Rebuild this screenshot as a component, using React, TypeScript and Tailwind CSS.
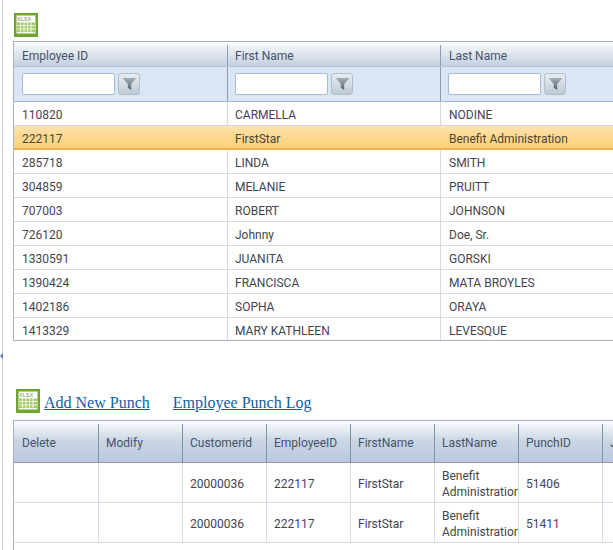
const employees = [
  ['110820', 'CARMELLA', 'NODINE'],
  ['222117', 'FirstStar', 'Benefit Administration'],
  ['285718', 'LINDA', 'SMITH'],
  ['304859', 'MELANIE', 'PRUITT'],
  ['707003', 'ROBERT', 'JOHNSON'],
  ['726120', 'Johnny', 'Doe, Sr.'],
  ['1330591', 'JUANITA', 'GORSKI'],
  ['1390424', 'FRANCISCA', 'MATA BROYLES'],
  ['1402186', 'SOPHA', 'ORAYA'],
  ['1413329', 'MARY KATHLEEN', 'LEVESQUE'],
]

const punches = [
  ['20000036', '222117', 'FirstStar', '51406'],
  ['20000036', '222117', 'FirstStar', '51411'],
]

const XlsxIcon = () => (
  <svg width="24" height="24" viewBox="0 0 24 24" className="shrink-0">
    <rect width="24" height="24" fill="#6ea52c" />
    <rect x="2.5" y="2.5" width="19" height="18" fill="#fff" />
    <rect x="3" y="9" width="18" height="11" fill="#a5cc6b" />
    <path
      d="M3 9h18M3 12.5h18M3 16h18M3 19.5h18M6.5 9v11M10 9v11M13.5 9v11M17 9v11"
      stroke="#fff"
      strokeWidth="0.8"
      fill="none"
    />
    <text x="3" y="7.5" fontSize="5.5" fill="#6f8f4a" fontFamily="Liberation Sans, sans-serif">
      XLSX
    </text>
  </svg>
)

const FilterBox = () => (
  <div className="flex items-center gap-[3px] pb-[1px]">
    <div className="h-[22px] w-[93px] rounded-[2px] border border-[#a9bcd3] bg-white" />
    <div className="flex h-[22px] w-[22px] items-center justify-center rounded-[3px] border border-[#b4bfcc] bg-gradient-to-b from-[#e8edf2] to-[#bfc9d5]">
      <svg width="15" height="14" viewBox="0 0 14 13">
        <defs>
          <linearGradient id="funnel" x1="0" y1="0" x2="0" y2="1">
            <stop offset="0" stopColor="#a6afb7" />
            <stop offset="1" stopColor="#56616b" />
          </linearGradient>
        </defs>
        <path d="M0.5 1h13L8.6 6.4V12L5.4 10V6.4z" fill="url(#funnel)" />
      </svg>
    </div>
  </div>
)

export default function App() {
  return (
    <div
      className="relative flex h-[550px] w-[613px] overflow-hidden bg-white text-[12px] text-[#3f4450]"
      style={{ fontFamily: 'Roboto, "Open Sans", sans-serif' }}
    >
      <div className="h-full w-[3px] shrink-0 border-r border-[#c3cfdf]" />
      <div className="absolute left-0 top-[353px] h-0 w-0 border-y-[3px] border-r-[3px] border-y-transparent border-r-[#5d7fa8]" />

      <div className="flex w-[610px] shrink-0 flex-col pl-[10px]">
        <div className="flex h-[41px] shrink-0 items-end pb-[4px] pl-[1px]">
          <XlsxIcon />
        </div>

        <div className="h-[300px] w-[700px] shrink-0 overflow-hidden border border-[#a6b0bf]">
          <div className="flex h-[25px] border-b border-[#b4c3d6] bg-gradient-to-b from-[#fbfcfd] to-[#c3cfdf] pt-[3px] text-[#47536a]">
            <div className="flex w-[214px] items-center border-r border-[#8e9db3] pl-2">Employee ID</div>
            <div className="flex w-[213px] items-center border-r border-[#8e9db3] pl-[7px]">First Name</div>
            <div className="flex flex-1 items-center pl-2">Last Name</div>
          </div>
          <div className="flex h-[35px] border-b border-[#a9b5c6] bg-[#d9e7f5]">
            <div className="flex w-[214px] items-center border-r border-[#8e9db3] pl-2">
              <FilterBox />
            </div>
            <div className="flex w-[213px] items-center border-r border-[#8e9db3] pl-[7px]">
              <FilterBox />
            </div>
            <div className="flex flex-1 items-center pl-[7px]">
              <FilterBox />
            </div>
          </div>
          {employees.map((row, i) => (
            <div
              key={row[0]}
              className={
                i === 1
                  ? 'flex h-[24px] border-b-2 border-[#eeb04a] bg-gradient-to-b from-[#fde3ae] via-[#fdd88f] to-[#fbd27c] pt-[3px] text-[#4a4632]'
                  : 'flex h-[24px] border-b border-[#d3dae5]'
              }
            >
              <div className={i === 1 ? 'flex w-[214px] items-center pl-2' : 'flex w-[214px] items-center border-r border-[#d3dae5] pl-2 pt-[2px]'}>
                {row[0]}
              </div>
              <div className={i === 1 ? 'flex w-[213px] items-center pl-[7px]' : 'flex w-[213px] items-center border-r border-[#d3dae5] pl-[7px] pt-[2px]'}>
                {row[1]}
              </div>
              <div className={i === 1 ? 'flex flex-1 items-center pl-2' : 'flex flex-1 items-center pl-2 pt-[2px]'}>{row[2]}</div>
            </div>
          ))}
        </div>

        <div className="mt-[48px] flex h-[31px] shrink-0 items-start pl-[3px] font-['Liberation_Serif',serif] text-[16px] text-[#0f5f9f] underline">
          <XlsxIcon />
          <div className="ml-1 mt-[4px] flex gap-[23px] leading-[20px]">
            <a href="#">Add New Punch</a>
            <a href="#">Employee Punch Log</a>
          </div>
        </div>

        <div className="h-[130px] w-[700px] shrink-0 border-l border-t border-[#a6b0bf]">
          <div className="flex h-[42px] border-b border-[#8e9db3] bg-gradient-to-b from-[#fbfcfd] via-[#c9d5e4] to-[#b9c9dc] pt-[3px] text-[#47536a]">
            {['Delete', 'Modify', 'Customerid', 'EmployeeID', 'FirstName', 'LastName', 'PunchID', 'J'].map((name) => (
              <div key={name} className="flex w-[84px] shrink-0 items-center overflow-hidden border-r border-[#7f90a8] pl-[7px] first:w-[85px] first:pl-2">
                {name}
              </div>
            ))}
          </div>
          {punches.map((row) => (
            <div key={row[3]} className="flex h-[40px] border-b border-[#d3dae5]">
              <div className="w-[85px] shrink-0 border-r border-[#d3dae5]" />
              <div className="w-[84px] shrink-0 border-r border-[#d3dae5]" />
              <div className="flex w-[84px] shrink-0 items-center border-r border-[#d3dae5] pl-[7px] pt-[3px]">{row[0]}</div>
              <div className="flex w-[84px] shrink-0 items-center border-r border-[#d3dae5] pl-[7px] pt-[3px]">{row[1]}</div>
              <div className="flex w-[84px] shrink-0 items-center border-r border-[#d3dae5] pl-[7px] pt-[3px]">{row[2]}</div>
              <div className="flex w-[84px] shrink-0 items-center overflow-hidden whitespace-nowrap border-r border-[#d3dae5] pl-[7px] pt-[3px] leading-[16px]">
                <span>
                  Benefit
                  <br />
                  Administration
                </span>
              </div>
              <div className="flex w-[84px] shrink-0 items-center border-r border-[#d3dae5] pl-[7px] pt-[3px]">{row[3]}</div>
              <div className="w-[84px] shrink-0 border-r border-[#d3dae5]" />
            </div>
          ))}
        </div>
      </div>
    </div>
  )
}
